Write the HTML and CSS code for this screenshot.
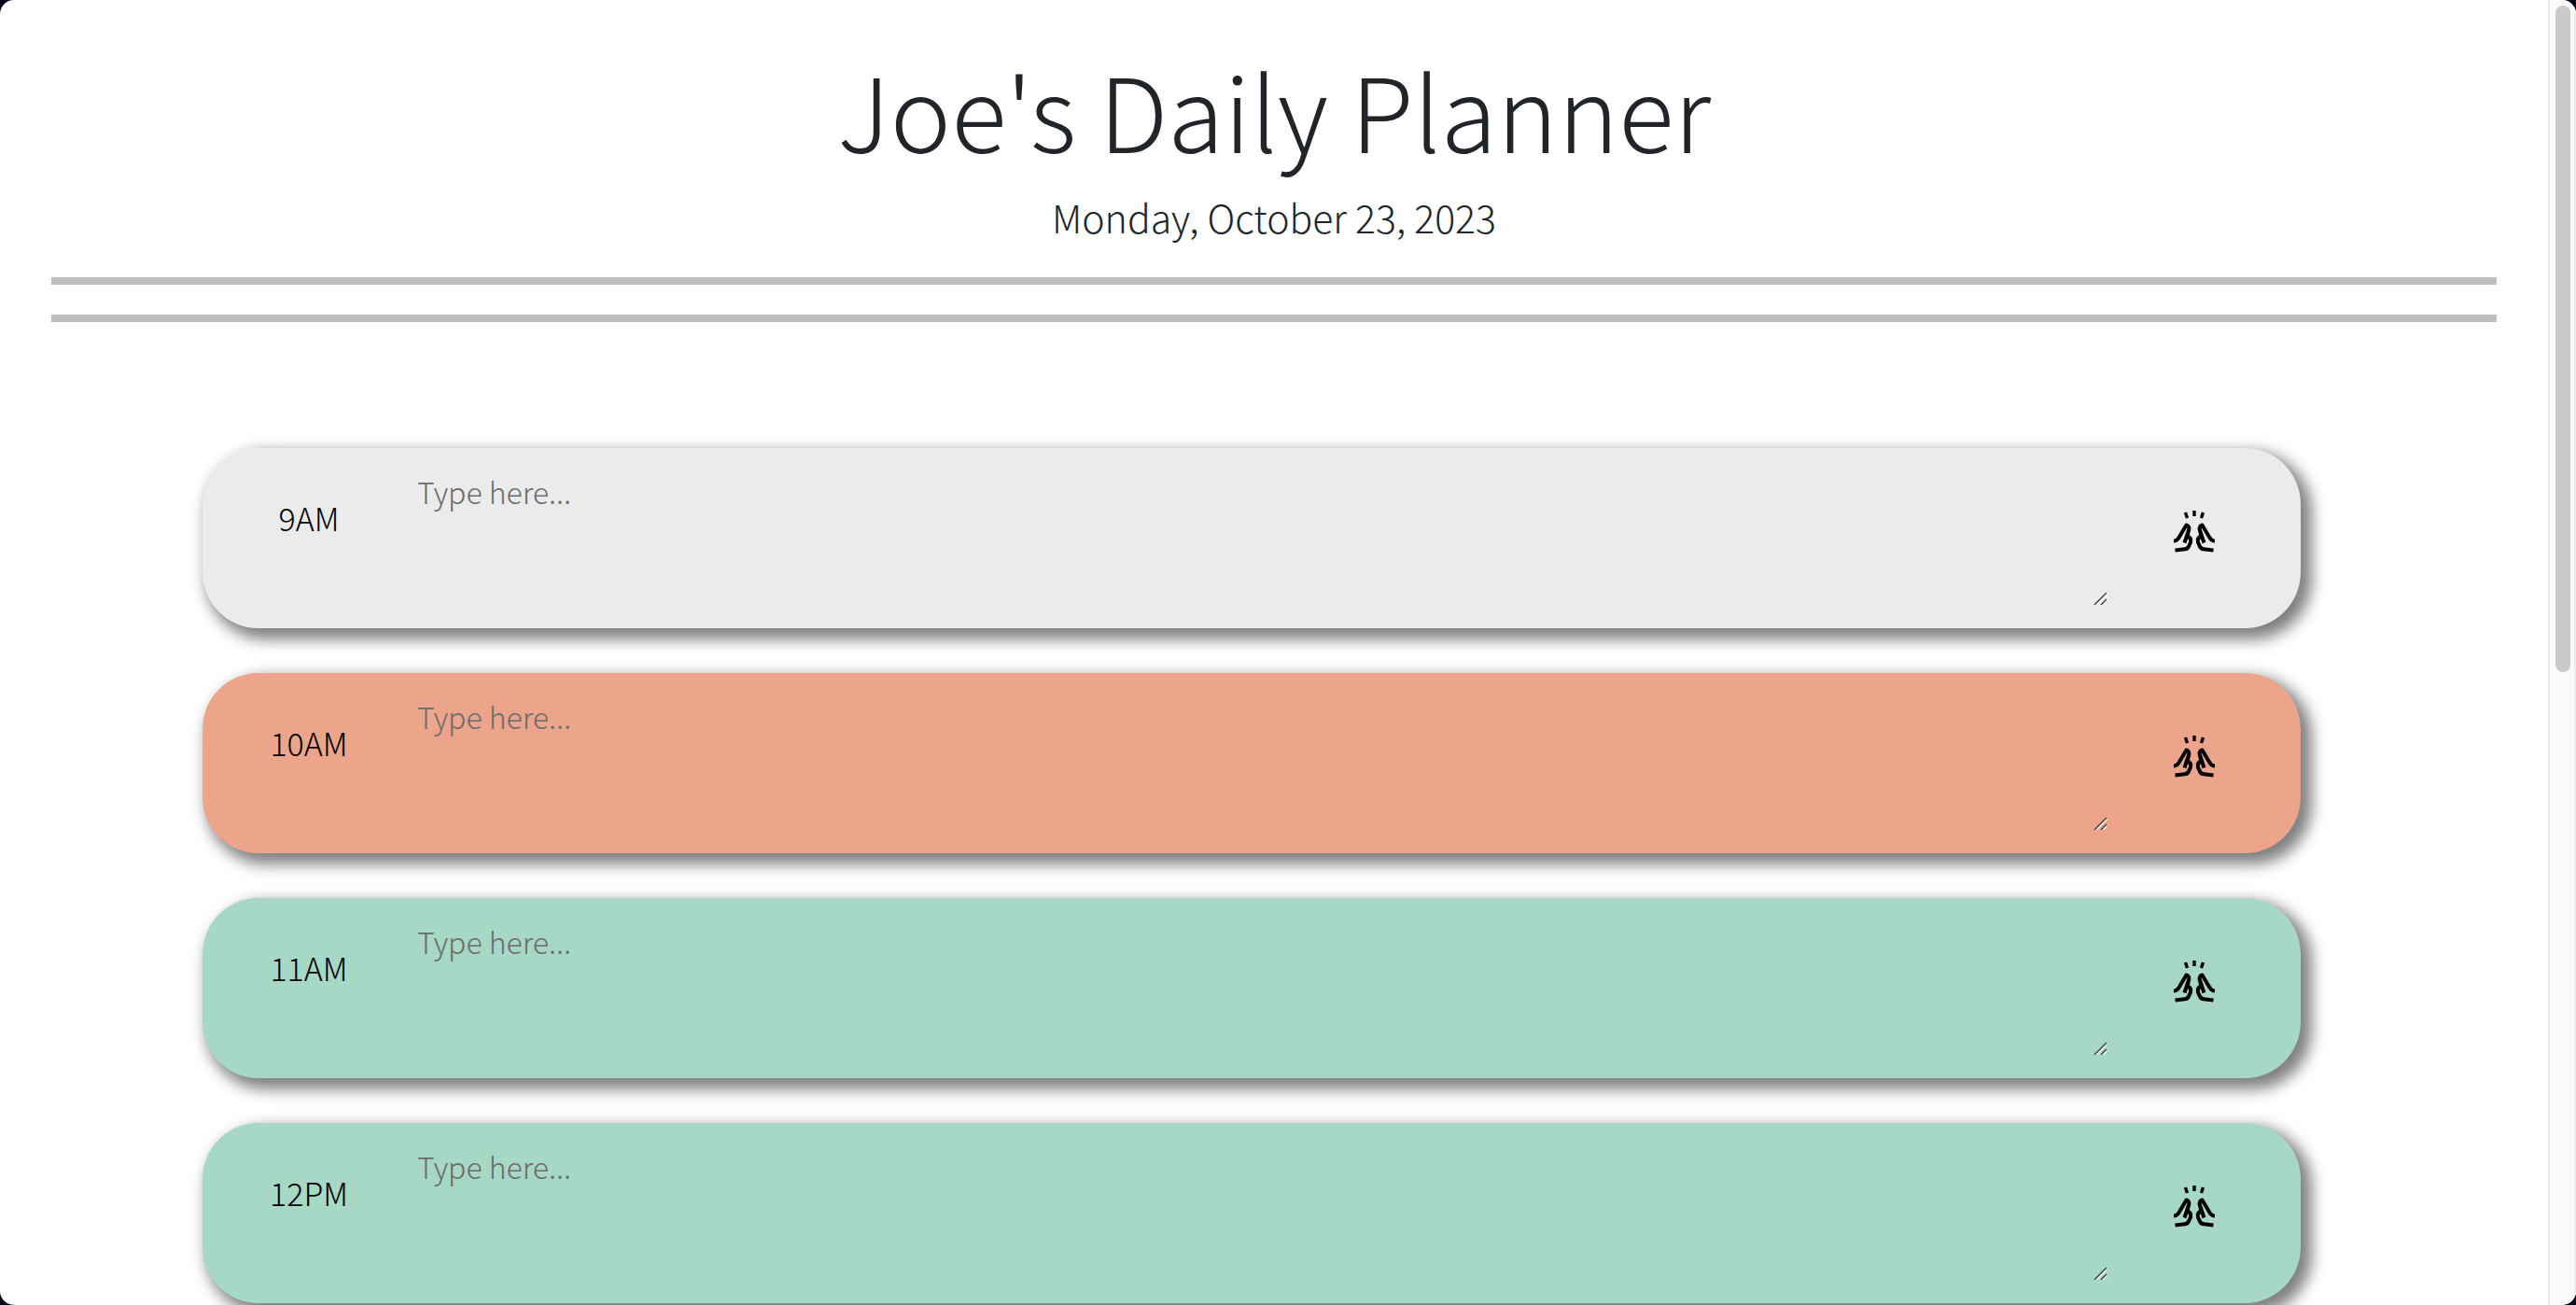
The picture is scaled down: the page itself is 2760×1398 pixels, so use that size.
FILE: index.html
```html
<!DOCTYPE html>
<html lang="en">
<head>
<meta charset="utf-8">
<meta name="viewport" content="width=device-width, initial-scale=1">
<title>Joe's Daily Planner</title>
<link rel="stylesheet" href="styles.css">
</head>
<body>
<svg class="sprite" aria-hidden="true">
  <symbol id="hands" viewBox="0 0 46 46">
    <g fill="none" stroke="currentColor" stroke-width="4" stroke-linejoin="round">
      <path d="M1 32.500C4 32.500 5 31.500 6.500 29L14.500 15.500C17 16 17.700 18 17.200 20.500L12.500 34.500M17.200 20.500L15.500 27.500C19 28.500 19.800 30.500 19 34L17 38.500C16 40.500 15 41 13 41.200L2.500 42.500"/>
      <path d="M45 32.500C42 32.500 41 31.500 39.500 29L31.500 15.500C29 16 28.300 18 28.800 20.500L33.500 34.500M28.800 20.500L30.500 27.500C27 28.500 26.200 30.500 27 34L29 38.500C30 40.500 31 41 33 41.200L43.500 42.500"/>
      <path stroke-width="3.4" d="M23 0V6M13.500 2L15.500 8M32.500 2L30.500 8"/>
    </g>
  </symbol>
</svg>
<div class="window">
  <div class="page">
    <header class="header">
      <h1 class="title">Joe's Daily Planner</h1>
      <p class="date">Monday, October 23, 2023</p>
      <hr class="rule">
      <hr class="rule">
    </header>
    <main class="planner">
      <form class="block past">
        <label class="hour" for="hour-9">9AM</label>
        <textarea class="entry" id="hour-9" placeholder="Type here..."></textarea>
        <button class="save" type="button" aria-label="Save 9AM"><svg class="icon" aria-hidden="true"><use href="#hands"/></svg></button>
      </form>
      <form class="block present">
        <label class="hour" for="hour-10">10AM</label>
        <textarea class="entry" id="hour-10" placeholder="Type here..."></textarea>
        <button class="save" type="button" aria-label="Save 10AM"><svg class="icon" aria-hidden="true"><use href="#hands"/></svg></button>
      </form>
      <form class="block future">
        <label class="hour" for="hour-11">11AM</label>
        <textarea class="entry" id="hour-11" placeholder="Type here..."></textarea>
        <button class="save" type="button" aria-label="Save 11AM"><svg class="icon" aria-hidden="true"><use href="#hands"/></svg></button>
      </form>
      <form class="block future">
        <label class="hour" for="hour-12">12PM</label>
        <textarea class="entry" id="hour-12" placeholder="Type here..."></textarea>
        <button class="save" type="button" aria-label="Save 12PM"><svg class="icon" aria-hidden="true"><use href="#hands"/></svg></button>
      </form>
    </main>
  </div>
  <div class="scroll-track" aria-hidden="true"><div class="scroll-thumb"></div></div>
</div>
</body>
</html>
```
FILE: styles.css
```css
* {
  box-sizing: border-box;
}

body {
  margin: 0;
  background: #02041a;
  color: #212529;
  font-family: "Noto Sans CJK JP", "Noto Sans", sans-serif;
  font-weight: 300;
  font-size: 32px;
  line-height: 48px;
}

.sprite {
  display: none;
}

.window {
  display: flex;
  height: 100vh;
  overflow: hidden;
  background: #fff;
  border-radius: 15px;
}

.page {
  flex: 1;
  min-width: 0;
}

.header {
  padding: 48px 2% 0;
  text-align: center;
}

.title {
  margin: 0 0 16px;
  font-size: 110px;
  font-weight: 300;
  line-height: 136px;
}

.date {
  margin: 0 0 33px;
  font-size: 41px;
  line-height: 64px;
}

.rule {
  height: 8px;
  margin: 0 0 32px;
  border: 0;
  background: #bebebe;
}

.planner {
  display: flex;
  flex-direction: column;
  gap: 48px;
  padding: 103px 265px 48px 217px;
}

.block {
  display: grid;
  grid-template-columns: 228px 1fr 228px;
  height: 193px;
  border-radius: 60px;
  box-shadow: 8px 8px 16px 4px #808080;
}

.past {
  background: #ebebeb;
}

.present {
  background: #eca48a;
}

.future {
  background: #a7d8c5;
}

.hour {
  padding-top: 51px;
  color: #000;
  font-size: 34px;
  text-align: center;
}

.entry {
  width: auto;
  height: 148px;
  margin: 20px -20px 0 0;
  padding: 2px;
  border: 0;
  background: transparent;
  color: #000;
  font: inherit;
  line-height: 48px;
  resize: vertical;
}

.entry::placeholder {
  color: #6c6c6c;
}

.entry::-webkit-scrollbar {
  width: 18px;
}

.entry::-webkit-resizer {
  background: url("data:image/svg+xml,%3Csvg xmlns='http://www.w3.org/2000/svg' width='18' height='18' fill='none' stroke-width='1.5'%3E%3Cpath stroke='%23fff' d='M3 16L16 3M10 16L16 10'/%3E%3Cpath stroke='%23444' d='M2 15L15 2M9 15L15 9'/%3E%3C/svg%3E") no-repeat;
}

.save {
  display: flex;
  align-items: center;
  justify-content: center;
  padding: 0;
  margin-top: -14px;
  border: 0;
  background: none;
  color: #000;
}

.icon {
  width: 46px;
  height: 46px;
}

.scroll-track {
  width: 30px;
  padding: 6px 4px 6px 6px;
  border-left: 2px solid #e8e8e8;
  border-right: 2px solid #ececec;
  background: #fafafa;
}

.scroll-thumb {
  width: 16px;
  height: 51.5%;
  border-radius: 8px;
  background: #c9c9c9;
}
```
